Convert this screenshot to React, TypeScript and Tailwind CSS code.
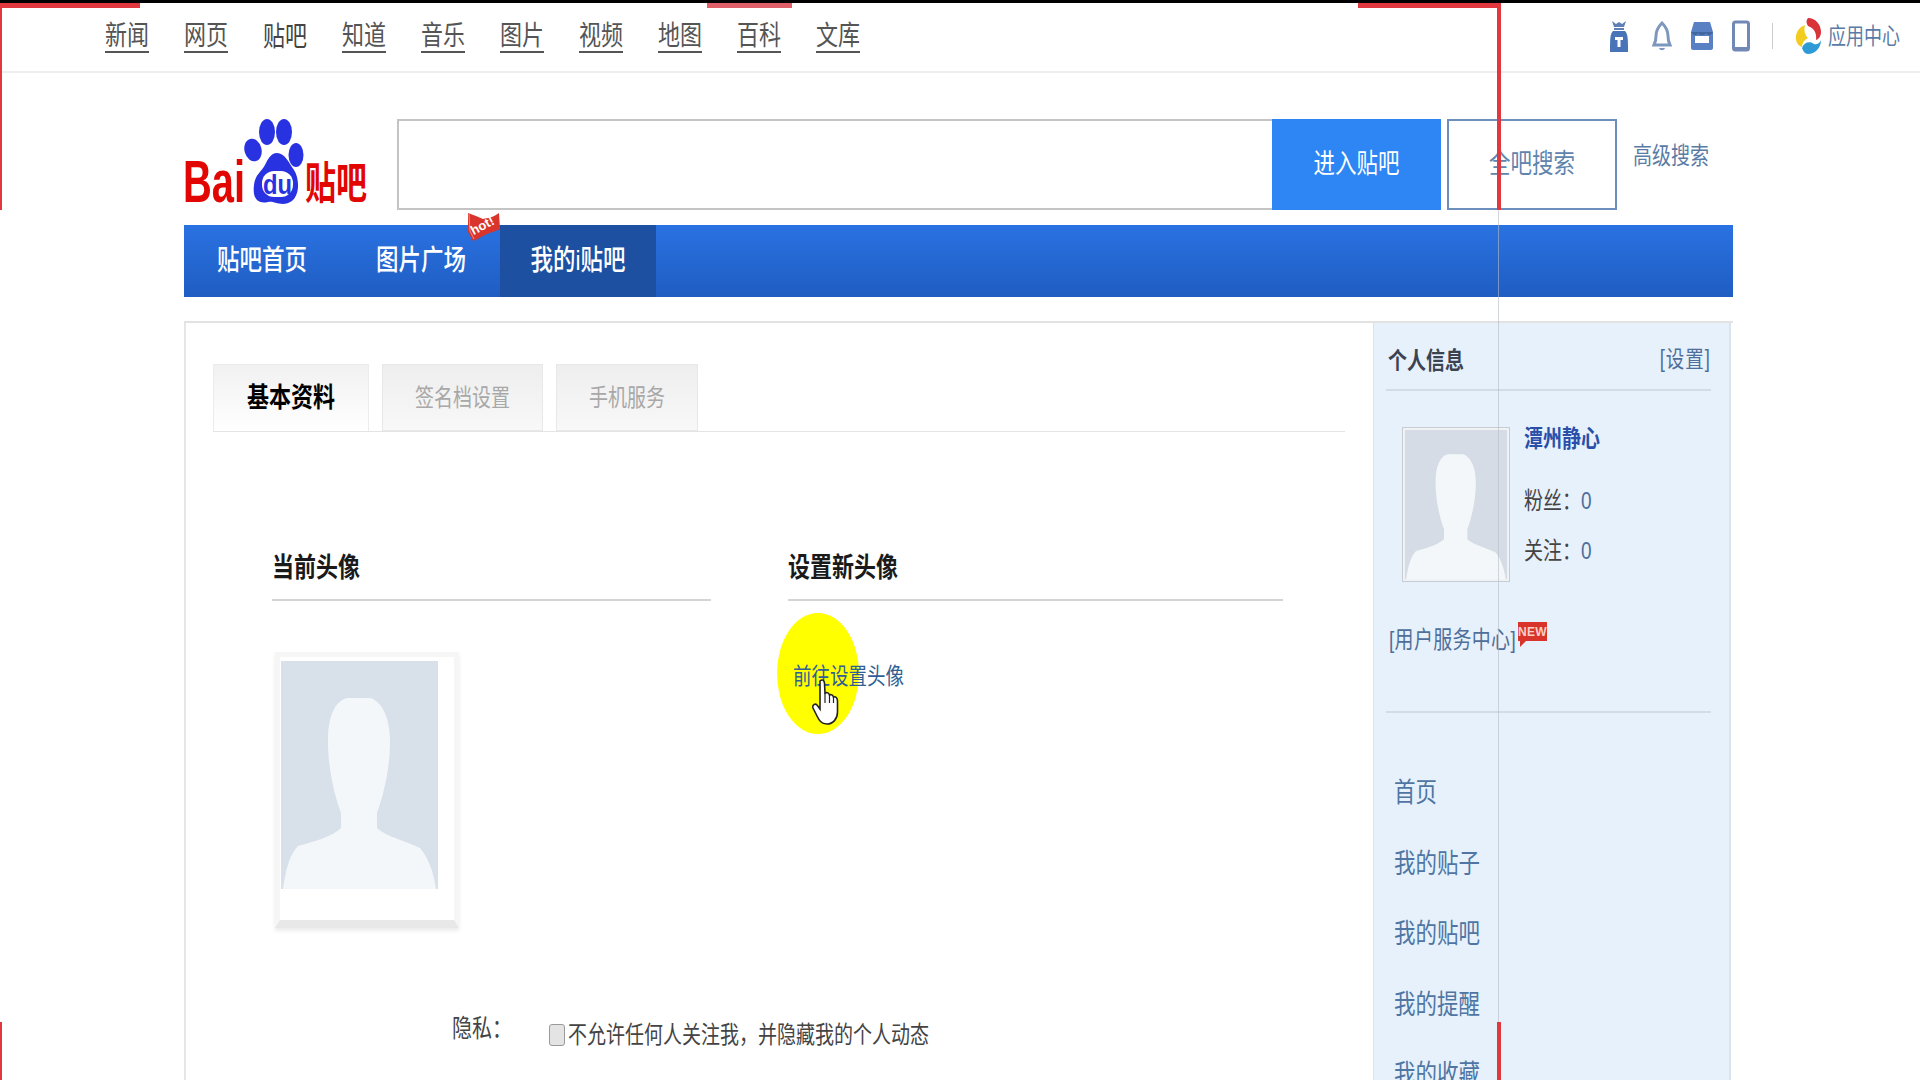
import React from "react";

const FONT = '"Liberation Sans", "Noto Sans CJK SC", sans-serif';

function T({ children, className = "" }: { children: React.ReactNode; className?: string }) {
  return <span className={"inline-block origin-center scale-y-[1.25] whitespace-nowrap leading-none " + className}>{children}</span>;
}

function Logo() {
  return (
    <svg width="186" height="88" viewBox="183 117 186 88" className="block overflow-visible">
      <g fill="#2932e1">
        <ellipse cx="253" cy="150" rx="8.5" ry="11.5" transform="rotate(-15 253 150)" />
        <ellipse cx="267" cy="132" rx="8" ry="13" />
        <ellipse cx="284" cy="132" rx="8" ry="13" />
        <ellipse cx="296" cy="155" rx="7.5" ry="12" />
        <path d="M277 153 C285 153 289 163 294 170 C301 181 300 204 283 204 C276 204 273 201 268 202 C260 204 252 201 254 185 C255 175 261 172 265 165 C268 159 271 153 277 153 Z" />
      </g>
      <rect x="262" y="171" width="31" height="26" rx="12" fill="#ffffff" />
      <text transform="translate(263 194) scale(1 1.1)" fontFamily="Liberation Sans" fontWeight="700" fontSize="25" fill="#2932e1" textLength="29" lengthAdjust="spacingAndGlyphs">du</text>
      <text transform="translate(183 202) scale(1 1.46)" fontFamily="Liberation Sans" fontWeight="700" fontSize="40" fill="#e10601" textLength="62" lengthAdjust="spacingAndGlyphs">Bai</text>
      <text transform="translate(305 199) scale(1 1.42)" fontFamily="Noto Sans CJK SC" fontWeight="700" fontSize="31" fill="#e10601" textLength="62" lengthAdjust="spacingAndGlyphs">贴吧</text>
    </svg>
  );
}

function Silhouette({ fill = "#f3f7fa", bg = "#d8e0ea" }: { fill?: string; bg?: string }) {
  return (
    <svg viewBox="0 0 157 228" preserveAspectRatio="none" className="block w-full h-full">
      <rect width="157" height="228" fill={bg} />
      <path
        d="M2 228 C5 205 10 192 17 185 C35 180 50 176 60 167 L60 152 C54 135 47 110 47 80 C47 55 54 40 66 37 L90 37 C102 42 109 58 109 80 C109 110 102 135 96 152 L96 167 C106 176 125 180 139 187 C146 195 152 208 155 228 Z"
        fill={fill}
      />
    </svg>
  );
}

function HotRibbon() {
  return (
    <div className="absolute left-[284px] -top-[12px] w-[32px] h-[28px]">
      <svg width="32" height="28" viewBox="0 0 32 28" className="block">
        <path d="M0 0 L8 3 L15 6 C20 5 26 4 31 0 L32 16 C26 19 20 20 15 23 C11 25 8 27 5 28 L0 19 Z" fill="#d9352c" />
        <path d="M1 1 L2 18 L6 26" stroke="#f08a80" strokeWidth="1" fill="none" />
      </svg>
      <span className="absolute left-[2px] top-[6px] text-[13px] font-bold text-white leading-none -rotate-[28deg]">hot!</span>
    </div>
  );
}

function Bag() {
  return (
    <svg width="20" height="34" viewBox="0 0 20 34">
      <path d="M3 2 L7 5 L10 3 L13 5 L17 2 L15 8 L5 8 Z" fill="#5f7fb5" />
      <rect x="5" y="9" width="10" height="2" fill="#5f7fb5" />
      <path d="M4 12 L16 12 C19 15 19 20 19 33 L1 33 C1 20 1 15 4 12 Z" fill="#4a74b8" />
      <path d="M6 18 H14 V21 H11.5 V28 H8.5 V21 H6 Z" fill="#ffffff" />
    </svg>
  );
}
function Bell() {
  return (
    <svg width="20" height="34" viewBox="0 0 20 34" fill="none">
      <path d="M10 4 C14 8 16 12 16 17 C16 21 17 24 18 26 H2 C3 24 4 21 4 17 C4 12 6 8 10 4 Z" stroke="#7d97bd" strokeWidth="3" fill="#ffffff" />
      <path d="M7 29 C8 32 12 32 13 29 Z" fill="#7d97bd" />
    </svg>
  );
}
function Shop() {
  return (
    <svg width="22" height="34" viewBox="0 0 22 34">
      <path d="M3 3 H19 L22 13 V29 C22 30 21 31 20 31 H2 C1 31 0 30 0 29 V13 Z" fill="#5a80c4" />
      <rect x="4" y="17" width="14" height="7" fill="#ffffff" />
      <path d="M0 13 C3 17 5 17 7 14 C9 17 13 17 15 14 C17 17 20 17 22 13 Z" fill="#42669f" />
    </svg>
  );
}
function Tablet() {
  return (
    <svg width="18" height="34" viewBox="0 0 18 34" fill="none">
      <rect x="1.5" y="3" width="15" height="28" rx="2" stroke="#7289b5" strokeWidth="3" />
      <rect x="1" y="28" width="16" height="4" fill="#7289b5" />
    </svg>
  );
}
function AppLogo() {
  return (
    <svg width="27" height="38" viewBox="0 0 27 38">
      <path d="M13 1 C21 1 26 8 26 15 C26 19 24 22 21 23 C22 16 19 11 13 9 C11 6 11 3 13 1 Z" fill="#d8343a" />
      <path d="M10 8 C4 10 0 16 1 23 C2 27 4 29 7 30 C7 26 9 23 13 21 C9 17 9 12 10 8 Z" fill="#f2cd1f" />
      <path d="M7 31 C9 25 15 24 19 27 C22 28 25 26 26 23 C26 31 20 37 13 37 C10 37 8 34 7 31 Z" fill="#2f9bd6" />
    </svg>
  );
}

function Hand() {
  return (
    <svg width="28" height="46" viewBox="0 0 28 46" className="absolute left-[811px] top-[679px]">
      <path
        d="M9 2 C11 0 13 1 13.5 4 L14 14 C16 13 18 14 18.500 16 C20 15 22 16 22.500 18 C24.500 17 26.500 19 26.500 22 L26.500 33 C26.500 40 22 45 16 45 C10 45 8 41 6 37 L2 29 C1 26 4 24 6 26 L9 30 Z"
        fill="#ffffff"
        stroke="#222222"
        strokeWidth="1.6"
      />
      <path d="M14 14 V24 M18.500 16 V24 M22.500 18 V24" stroke="#222222" strokeWidth="1.200" fill="none" />
    </svg>
  );
}

const NAV = ["新闻", "网页", "贴吧", "知道", "音乐", "图片", "视频", "地图", "百科", "文库"];
const LINKS = ["首页", "我的贴子", "我的贴吧", "我的提醒", "我的收藏"];

export default function App() {
  return (
    <div className="relative w-[1920px] h-[1080px] overflow-hidden bg-white" style={{ fontFamily: FONT }}>
      <div className="h-[3px] bg-black" />

      {/* top nav */}
      <div className="h-[70px] border-b-2 border-[#eeeeee] flex justify-between">
        <nav className="flex gap-[35px] pl-[105px] pt-[14px] items-start">
          {NAV.map((n) => (
            <a key={n} className={"w-[44px] h-[36px] pt-[3px] flex items-center justify-center text-[22px] " + (n === "贴吧" ? "text-[#444444]" : "text-[#555555] border-b-2 border-[#555555]")}>
              <T>{n}</T>
            </a>
          ))}
        </nav>
        <div className="flex items-center pr-[20px] pb-[2px]">
          <div className="flex items-center">
            <Bag />
            <div className="ml-[23px]"><Bell /></div>
            <div className="ml-[19px]"><Shop /></div>
            <div className="ml-[19px]"><Tablet /></div>
          </div>
          <div className="w-px h-[26px] bg-[#cccccc] ml-[22px] mr-[22px]" />
          <AppLogo />
          <T className="ml-[6px] text-[18px] text-[#5a7ba6]">应用中心</T>
        </div>
      </div>

      {/* search row */}
      <div className="flex ml-[183px] mt-[46px] h-[91px]">
        <div className="w-[214px] -mt-[2px]">
          <Logo />
        </div>
        <div className="w-[875px] border-2 border-[#c4c4c4] border-r-0 bg-white" />
        <button className="w-[169px] bg-[#2d86f4] text-white text-[21.5px] flex items-center justify-center">
          <T>进入贴吧</T>
        </button>
        <button className="w-[170px] ml-[6px] border-2 border-[#6c8fbd] text-[#5f84ad] text-[21.5px] flex items-center justify-center">
          <T>全吧搜索</T>
        </button>
        <div className="ml-[16px] pt-[23px] text-[19px] text-[#5a7ba6]">
          <T>高级搜索</T>
        </div>
      </div>

      {/* blue bar */}
      <div className="relative ml-[184px] w-[1549px] h-[72px] mt-[15px] flex bg-gradient-to-b from-[#2a72e2] to-[#1f5dc2] text-white text-[22.5px] font-medium">
        <div className="w-[159px] pl-[33px] flex items-center"><T>贴吧首页</T></div>
        <div className="w-[157px] pl-[33px] flex items-center"><T>图片广场</T></div>
        <div className="w-[156px] flex items-center justify-center bg-[#1e50a2]"><T>我的i贴吧</T></div>
        <HotRibbon />
      </div>

      {/* main panel */}
      <div className="ml-[184px] w-[1549px] mt-[24px] flex h-[800px] border-t-2 border-[#e2e2e2]">
        <div className="w-[1189px] border-l-2 border-[#e6e6e6] pt-[41px] pl-[27px]">
          {/* tabs */}
          <div className="w-[1132px] h-[68px] flex gap-[13px] border-b border-[#e4e4e4]">
            <div className="w-[156px] bg-gradient-to-b from-[#f1f1f1] to-[#ffffff] border border-b-0 border-[#ececec] flex items-center justify-center text-[22px] font-bold text-black">
              <T>基本资料</T>
            </div>
            <div className="w-[161px] bg-gradient-to-b from-[#eeeeee] to-[#f8f8f8] border border-[#e8e8e8] flex items-center justify-center text-[19px] text-[#a8a8a8]">
              <T>签名档设置</T>
            </div>
            <div className="w-[142px] bg-gradient-to-b from-[#eeeeee] to-[#f8f8f8] border border-[#e8e8e8] flex items-center justify-center text-[19px] text-[#a8a8a8]">
              <T>手机服务</T>
            </div>
          </div>

          {/* columns */}
          <div className="flex ml-[59px] mt-[115px]">
            <div className="w-[439px]">
              <div className="h-[54px] border-b-2 border-[#d4d4d4] text-[22px] font-bold text-[#1a1a1a] pt-[4px]">
                <T>当前头像</T>
              </div>
              <div className="mt-[51px] ml-[3px] w-[184px] h-[276px] border-[5px] border-[#f6f6f6] border-b-[8px] border-b-[#e8e8e8] pt-[4px] pl-[1px] bg-white shadow-[0_3px_4px_rgba(0,0,0,0.08)]">
                <div className="w-[157px] h-[228px]">
                  <Silhouette />
                </div>
              </div>
            </div>
            <div className="w-[495px] ml-[77px]">
              <div className="h-[54px] border-b-2 border-[#d4d4d4] text-[22px] font-bold text-[#1a1a1a] pt-[4px]">
                <T>设置新头像</T>
              </div>
              <div className="relative">
                <div className="absolute -left-[11px] top-[12px] w-[82px] h-[121px] rounded-[50%] bg-[#ffff00]" />
                <div className="relative pt-[62px] pl-[5px] text-[18.500px] text-[#2f5f95]">
                  <T>前往设置头像</T>
                </div>
              </div>
            </div>
          </div>

          {/* privacy */}
          <div className="flex items-center ml-[239px] mt-[83px]">
            <div className="w-[97px] mb-[5px] text-[20px] text-[#444444]">
              <T>隐私：</T>
            </div>
            <div className="w-[16px] h-[22px] mt-[9px] rounded-[3px] bg-[#e4e4e4] border border-[#9a9a9a]" />
            <div className="ml-[3px] mt-[10px] text-[19px] text-[#444444]">
              <T>不允许任何人关注我，并隐藏我的个人动态</T>
            </div>
          </div>
        </div>

        {/* sidebar */}
        <aside className="w-[358px] bg-[#e6f1fc] border-l border-r-2 border-[#dde3ea] pl-[12px] pr-[18px]">
          <div className="h-[68px] border-b-2 border-[#d2dce6] flex items-center justify-between pl-[2px] pt-[8px]">
            <T className="text-[19px] font-bold text-[#3c4350]">个人信息</T>
            <T className="text-[18.500px] tracking-[1px] text-[#4f6f9a]">[设置]</T>
          </div>
          <div className="flex mt-[37px] ml-[17px]">
            <div className="w-[106px] h-[153px] border-2 border-[#f0f3f6] outline outline-[#c8ccd2] shrink-0">
              <Silhouette fill="#f3f7fa" bg="#d5dce6" />
            </div>
            <div className="ml-[15px] -mt-[3px] text-[19px]">
              <div className="h-[26px] flex items-center font-bold text-[#2a4fa8]"><T>潭州静心</T></div>
              <div className="h-[26px] mt-[36px] flex items-center text-[#444444]">
                <T>粉丝：<span className="text-[#4f6f9a]">0</span></T>
              </div>
              <div className="h-[26px] mt-[24px] flex items-center text-[#444444]">
                <T>关注：<span className="text-[#4f6f9a]">0</span></T>
              </div>
            </div>
          </div>
          <div className="relative h-[132px] border-b-2 border-[#d2dce6] pt-[45px] pl-[3px] text-[19px] tracking-[0.3px] text-[#4f6f9a]">
            <T>[用户服务中心]</T>
            <div className="absolute left-[132px] top-[41px] w-[29px] h-[19px] bg-[#d9342b] flex items-center justify-center">
              <span className="text-[12px] font-bold text-[#f7d0c8] leading-none">NEW</span>
              <div className="absolute left-[2px] top-[18px] w-0 h-0 border-t-[7px] border-t-[#d9342b] border-r-[7px] border-r-transparent" />
            </div>
          </div>
          <ul className="mt-[64px] pl-[8px] text-[21.5px] text-[#4f75a3]">
            {LINKS.map((l) => (
              <li key={l} className="h-[70.5px]">
                <T>{l}</T>
              </li>
            ))}
          </ul>
        </aside>
      </div>

      {/* overlays: hand cursor and the red recording frame */}
      <Hand />
      <div className="absolute left-0 top-[3px] w-[140px] h-[5px] bg-[#e0383e]" />
      <div className="absolute left-0 top-[3px] w-[2px] h-[207px] bg-[#e0383e]" />
      <div className="absolute left-0 top-[1022px] w-[2px] h-[58px] bg-[#e0383e]" />
      <div className="absolute left-[707px] top-[3px] w-[85px] h-[5px] bg-[#e0606a]" />
      <div className="absolute left-[1358px] top-[3px] w-[143px] h-[5px] bg-[#e0383e]" />
      <div className="absolute left-[1497px] top-[3px] w-[4px] h-[207px] bg-[#e0383e]" />
      <div className="absolute left-[1498px] top-[210px] w-px h-[812px] bg-[#b4bcc4]/60" />
      <div className="absolute left-[1497px] top-[1022px] w-[4px] h-[58px] bg-[#e0383e]" />
    </div>
  );
}
